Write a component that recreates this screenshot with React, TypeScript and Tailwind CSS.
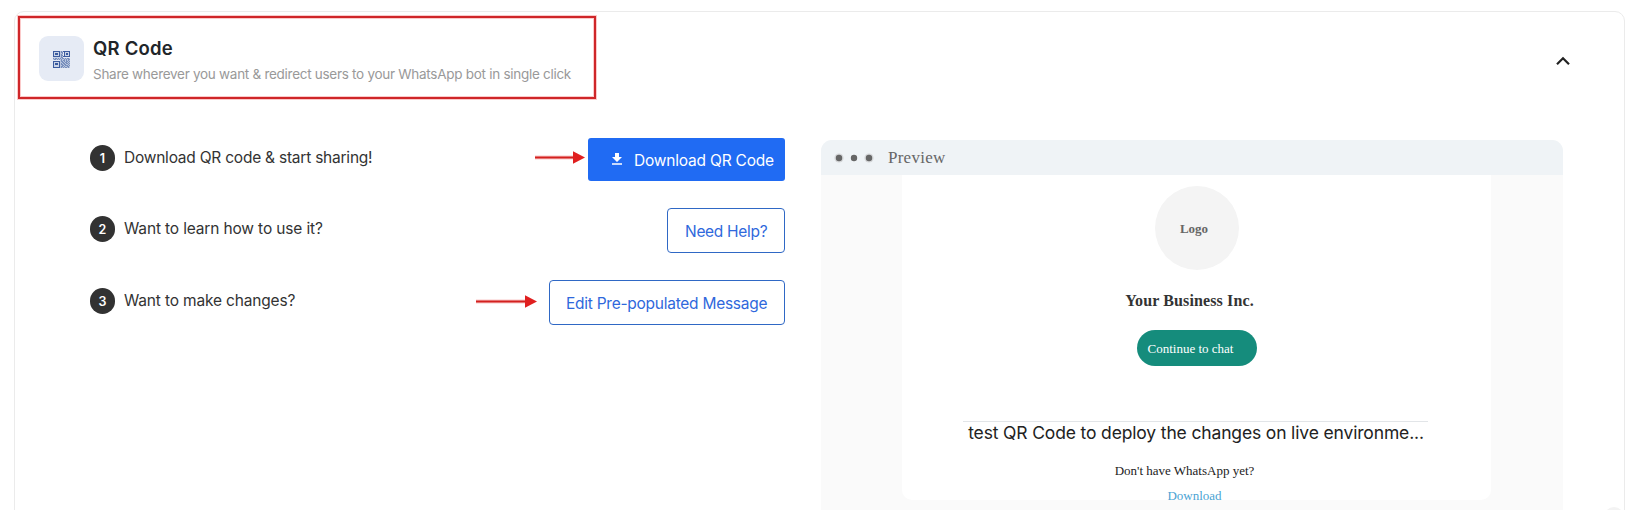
const QR_ROWS = [
  '11111110101111111',
  '10000010110100001',
  '10111010010101101',
  '10111010100101101',
  '10000010110100001',
  '11111110101111111',
  '00000000110000000',
  '10110101011010110',
  '01101010100101011',
  '00000000101101010',
  '11111110110101101',
  '10000010011011010',
  '10111010101101101',
  '10111010110110010',
  '10000010011011101',
  '10000010110100110',
  '11111110101011010',
];

function QrIcon() {
  return (
    <svg width="17" height="17" viewBox="0 0 17 17" fill="#2c4f97">
      <rect width="7" height="7" opacity="0.15" />
      <rect x="11" width="6" height="6" opacity="0.15" />
      <rect y="10" width="7" height="7" opacity="0.15" />
      <path d="M7 0H10V7H17V17H7V9H0V7H7Z" opacity="0.25" />
      {QR_ROWS.flatMap((row, y) =>
        row.split('').map((cell, x) =>
          cell === '1' ? (
            <rect key={`${x}-${y}`} x={x} y={y} width="1" height="1" opacity={(x > 6 && x < 10) || (y > 5 && y < 10) || (x > 6 && y > 6) ? 0.45 : 0.9} />
          ) : null,
        ),
      )}
    </svg>
  );
}

function Arrow({ length }: { length: number }) {
  return (
    <svg width={length} height="13" viewBox={`0 0 ${length} 13`}>
      <path d={`M0 6.5H${length - 11}`} stroke="#f9c9c9" strokeWidth="4" />
      <path d={`M0 6.5H${length - 11}`} stroke="#d3211f" strokeWidth="2" />
      <path d={`M${length - 12} 0.3L${length} 6.5L${length - 12} 12.7Z`} fill="#e01f1f" />
    </svg>
  );
}

function Step({ n }: { n: number }) {
  return (
    <span className="flex h-[26px] w-[25px] shrink-0 items-center justify-center rounded-full bg-[#323232] pt-[3px] text-[12.5px] font-semibold text-white">
      {n}
    </span>
  );
}

export default function App() {
  return (
    <div className="h-[510px] w-[1627px] overflow-hidden bg-white pl-[14px] pt-[11px] font-['Inter',sans-serif] whitespace-nowrap">
      <div className="relative h-[520px] w-[1611px] rounded-[10px] border border-[#ebebeb]">
        <header className="flex h-[90px] items-start justify-between pl-[3px] pt-[4px]">
          <div className="flex h-[83px] w-[578px] border-2 border-[#cf2629] pl-[19px] pt-[18px] shadow-[0_0_0_1px_#fbcaca,inset_0_0_0_1px_#fbcaca]">
            <div className="flex h-[45px] w-[45px] shrink-0 items-center justify-center rounded-[9px] bg-[#e6ebf5] pt-px">
              <QrIcon />
            </div>
            <div className="pl-[9px]">
              <h1 className="pt-px text-[18.5px] leading-[22px] font-semibold tracking-[0.2px] text-[#212529]">QR Code</h1>
              <p className="mt-[5px] text-[13.5px] leading-[20px] tracking-[-0.28px] text-[#999]">
                Share wherever you want &amp; redirect users to your WhatsApp bot in single click
              </p>
            </div>
          </div>
          <svg className="mt-[40px] mr-[53px]" width="16" height="10" viewBox="0 0 16 10" fill="none" stroke="#222" strokeWidth="2.2">
            <path d="M2 8.3L8 2.3L14 8.3" />
          </svg>
        </header>

        <main className="flex">
          <section className="ml-[75px] w-[695px] pt-[36px] text-[15.5px] text-[#333]">
            <div className="flex h-[43px] items-center">
              <div className="flex items-center pb-[4px]">
                <Step n={1} />
                <span className="ml-[9px] pt-px tracking-[-0.23px]">Download QR code &amp; start sharing!</span>
              </div>
              <div className="ml-auto flex items-center">
                <div className="mr-[3px] -mt-[4px]"><Arrow length={50} /></div>
                <button className="flex h-[43px] w-[197px] items-center rounded-[3px] bg-[#206bf3] pl-[23px] text-white">
                  <svg width="12" height="12" viewBox="0 0 12 12" fill="#fff" className="-mt-[2px]">
                    <path d="M4 0H8V4H11L6 9L1 4H4ZM1 10.3H11V11.7H1Z" />
                  </svg>
                  <span className="ml-[11px] pt-[3px] tracking-[-0.2px]">Download QR Code</span>
                </button>
              </div>
            </div>
            <div className="mt-[27px] flex h-[45px] items-center">
              <div className="flex items-center pb-[4px]">
                <Step n={2} />
                <span className="ml-[9px] pt-px tracking-[-0.15px]">Want to learn how to use it?</span>
              </div>
              <button className="ml-auto flex h-[45px] w-[118px] items-center rounded-[4px] border border-[#2f68c5] pl-[17px] pt-[3px] text-[#2f68dc]">
                <span className="tracking-[-0.3px]">Need Help?</span>
              </button>
            </div>
            <div className="mt-[27px] flex h-[45px] items-center">
              <div className="flex items-center pb-[4px]">
                <Step n={3} />
                <span className="ml-[9px] pt-px tracking-[-0.17px]">Want to make changes?</span>
              </div>
              <div className="ml-auto flex items-center">
                <div className="mr-[12px] -mt-[3px]"><Arrow length={61} /></div>
                <button className="flex h-[45px] w-[236px] items-center rounded-[4px] border border-[#2f68c5] pl-[16px] pt-[3px] text-[#2f68dc]">
                  <span className="tracking-[-0.26px]">Edit Pre-populated Message</span>
                </button>
              </div>
            </div>
          </section>

          <section className="ml-[36px] mt-[38px] w-[742px] overflow-hidden rounded-t-[11px] bg-[#fafafa] font-['Liberation_Serif',serif]">
            <div className="flex h-[35px] items-center bg-[#eff3f6] pl-[13px]">
              <svg width="40" height="10" viewBox="0 0 40 10" fill="#666">
                <circle cx="5" cy="5" r="4.6" fill="#d4d6d8" />
                <circle cx="35" cy="5" r="4.6" fill="#d4d6d8" />
                <circle cx="5" cy="5" r="3.2" />
                <circle cx="20" cy="5" r="3.2" />
                <circle cx="35" cy="5" r="3.2" />
              </svg>
              <span className="ml-[14px] text-[17px] tracking-[0.25px] text-[#666]">Preview</span>
            </div>
            <div className="ml-[81px] flex h-[325px] w-[589px] flex-col items-center rounded-b-[10px] bg-white pt-[11px]">
              <div className="ml-px flex h-[84px] w-[84px] shrink-0 items-center justify-center rounded-full bg-[#f4f4f4] pr-[6px] pt-[2px] text-[13px] font-bold text-[#666]">
                Logo
              </div>
              <h2 className="mt-[21px] mr-[14px] shrink-0 text-[16px] leading-[20px] font-bold tracking-[0.12px] text-[#333]">Your Business Inc.</h2>
              <button className="mt-[19px] flex h-[36px] w-[120px] shrink-0 items-center rounded-full bg-[#158c7c] pl-[11px] pt-px text-[13px] text-white">
                Continue to chat
              </button>
              <div className="mt-[55px] mr-[2px] h-px w-[465px] shrink-0 bg-[#e2e5e8]" />
              <p className="mr-px shrink-0 font-['Inter',sans-serif] text-[17.5px] leading-[22px] tracking-[-0.15px] text-[#222]">
                test QR Code to deploy the changes on live environme...
              </p>
              <p className="mt-[19px] mr-[24px] shrink-0 text-[13px] leading-[16px] text-[#222]">Don't have WhatsApp yet?</p>
              <a className="mt-[9px] mr-[4px] shrink-0 text-[13px] leading-[16px] text-[#4ba3d3]">Download</a>
            </div>
            <div className="h-[30px]" />
          </section>
        </main>
        <div className="absolute left-[1589px] top-[495px] h-[20px] w-[20px] rounded-full bg-[#f3f3f3]" />
      </div>
    </div>
  );
}
